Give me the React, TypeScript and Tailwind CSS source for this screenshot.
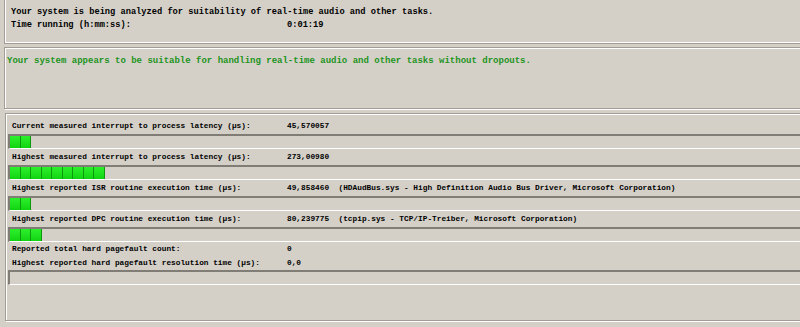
import React from 'react';

interface Row {
  label: string;
  value: string;
  detail?: string;
  segments?: number;
}

const rows: Row[] = [
  { label: 'Current measured interrupt to process latency (µs):', value: '45,570057', segments: 2 },
  { label: 'Highest measured interrupt to process latency (µs):', value: '273,00980', segments: 9 },
  {
    label: 'Highest reported ISR routine execution time (µs):',
    value: '49,858460',
    detail: '(HDAudBus.sys - High Definition Audio Bus Driver, Microsoft Corporation)',
    segments: 2
  },
  {
    label: 'Highest reported DPC routine execution time (µs):',
    value: '80,239775',
    detail: '(tcpip.sys - TCP/IP-Treiber, Microsoft Corporation)',
    segments: 3
  }
];

// Meter bar with sunken border and green blocks
const Meter: React.FC<{ segments: number }> = ({ segments }) => (
  <div className="h-[15px] ml-px border-t-2 border-l-2 border-[#807c76] border-b border-b-white flex">
    {Array.from({ length: segments }).map((_, i) => (
      <div
        key={i}
        className={`${i % 2 === 0 ? 'w-[11px]' : 'w-[10px]'} h-full bg-gradient-to-b from-[#2cf02c] to-[#10d410] border-r border-[#0c9a0c]`}
      />
    ))}
  </div>
);

const TextRow: React.FC<{ label: string; value: string; detail?: string; h: string }> = ({
  label,
  value,
  detail,
  h
}) => (
  <div className={`${h} flex items-center pt-[2px] pl-[5px] text-[7.8px] leading-none whitespace-pre`}>
    <span className="w-[275px] shrink-0">{label}</span>
    <span>{value}</span>
    {detail && <span>{'  ' + detail}</span>}
  </div>
);

export default function App() {
  return (
    <div
      className="w-[800px] h-[327px] overflow-hidden bg-[#d4d0c8] text-black font-bold"
      style={{ fontFamily: '"Liberation Mono", "DejaVu Sans Mono", monospace' }}
    >
      {/* Statut de l'analyse */}
      <div className="h-[44px] ml-[4px] w-[820px] border-l border-b border-[#a19d96] shadow-[inset_1px_-1px_0_#ffffff] pt-[6px] pl-[6px] text-[8.7px] leading-[13px] whitespace-pre">
        <div>Your system is being analyzed for suitability of real-time audio and other tasks.</div>
        <div className="flex">
          <span className="w-[276px]">Time running (h:mm:ss):</span>
          <span>0:01:19</span>
        </div>
      </div>

      {/* Message de conclusion */}
      <div className="mt-[3px] h-[62px] ml-[4px] w-[820px] border border-[#a19d96] shadow-[inset_1px_1px_0_#ffffff,1px_1px_0_#ffffff] pt-[7px] pl-[2px] text-[9px] leading-[13px] text-[#1c941c] whitespace-pre">
        Your system appears to be suitable for handling real-time audio and other tasks without dropouts.
      </div>

      {/* Mesures */}
      <div className="mt-[4px] h-[208px] ml-[5px] w-[820px] border border-[#a19d96] shadow-[inset_1px_1px_0_#ffffff,1px_1px_0_#ffffff] pt-[4px] pl-px">
        {rows.map((r, i) => (
          <React.Fragment key={i}>
            <TextRow label={r.label} value={r.value} detail={r.detail} h="h-[16px]" />
            <Meter segments={r.segments ?? 0} />
          </React.Fragment>
        ))}
        <TextRow label="Reported total hard pagefault count:" value="0" h="h-[14px]" />
        <TextRow label="Highest reported hard pagefault resolution time (µs):" value="0,0" h="h-[14px]" />
        <Meter segments={0} />
      </div>
    </div>
  );
}
